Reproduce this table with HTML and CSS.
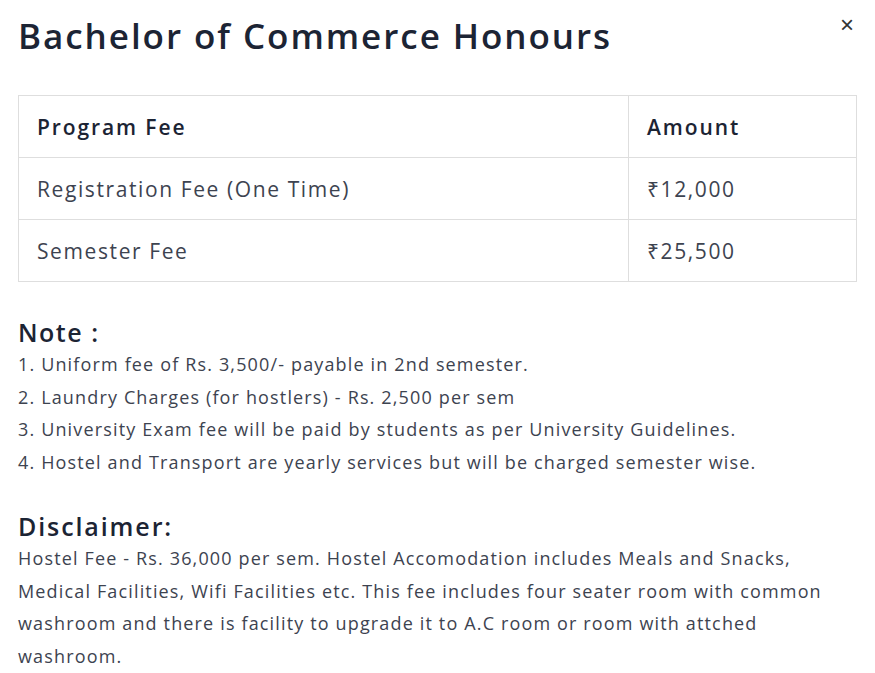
FILE: index.html
```html
<!DOCTYPE html>
<html lang="en">
<head>
    <meta charset="UTF-8">
    <meta name="viewport" content="width=device-width, initial-scale=1.0">
    <title>Bachelor of Commerce Honours</title>
    <link rel="stylesheet" href="styles.css">
</head>
<body>
    <div class="modal">
        <div class="modal-header">
            <h2 class="modal-title">Bachelor of Commerce Honours</h2>
            <button class="close" type="button">&times;</button>
        </div>

        <!-- Таблица с оплатой -->
        <table class="fee-table">
            <tr>
                <th>Program Fee</th>
                <th class="amount">Amount</th>
            </tr>
            <tr>
                <td>Registration Fee (One Time)</td>
                <td class="amount">₹12,000</td>
            </tr>
            <tr>
                <td>Semester Fee</td>
                <td class="amount">₹25,500</td>
            </tr>
        </table>

        <h3 class="note-title">Note :</h3>
        <ul class="notes">
            <li>1. Uniform fee of Rs. 3,500/- payable in 2nd semester.</li>
            <li>2. Laundry Charges (for hostlers) - Rs. 2,500 per sem</li>
            <li>3. University Exam fee will be paid by students as per University Guidelines.</li>
            <li>4. Hostel and Transport are yearly services but will be charged semester wise.</li>
        </ul>

        <h3 class="note-title disclaimer">Disclaimer:</h3>
        <p class="disclaimer-text">Hostel Fee - Rs. 36,000 per sem. Hostel Accomodation includes Meals and Snacks, Medical Facilities, Wifi Facilities etc. This fee includes four seater room with common washroom and there is facility to upgrade it to A.C room or room with attched washroom.</p>
    </div>
</body>
</html>
```

FILE: styles.css
```css
body {
    font-family: "Open Sans", Arial, sans-serif;
    background-color: #fff;
    color: #3d4350;
    margin: 0;
    padding: 0;
}

.modal {
    padding: 0 18px;
}

.modal-header {
    display: flex;
    justify-content: space-between;
    align-items: flex-start;
    height: 95px;
}

.modal-title {
    margin: 12px 0 0;
    font-size: 35px;
    font-weight: 600;
    letter-spacing: 1.95px;
    color: #1c2434;
}

.close {
    background: none;
    border: none;
    padding: 0;
    margin: 13px 3px 0 0;
    font-size: 24px;
    line-height: 24px;
    color: #333;
    cursor: pointer;
}

.fee-table {
    width: 100%;
    border-collapse: collapse;
    font-size: 21px;
    letter-spacing: 1.6px;
}

.fee-table th,
.fee-table td {
    border: 1px solid #dedede;
    height: 61px;
    padding: 0 18px;
    text-align: left;
}

.fee-table th {
    font-weight: 600;
    letter-spacing: 1.9px;
    color: #1c2434;
}

.fee-table .amount {
    width: 191px;
}

.note-title {
    margin: 34px 0 0;
    font-size: 25px;
    font-weight: 600;
    line-height: 32px;
    letter-spacing: 1.5px;
    color: #1c2434;
}

.disclaimer {
    margin-top: 32px;
    letter-spacing: 1.9px;
}

.notes {
    list-style-type: none;
    padding: 0;
    margin: 0;
    font-size: 18px;
    line-height: 32.5px;
    letter-spacing: 1.15px;
}

.disclaimer-text {
    margin: 0;
    font-size: 18px;
    line-height: 32.6px;
    letter-spacing: 1.15px;
}
```
